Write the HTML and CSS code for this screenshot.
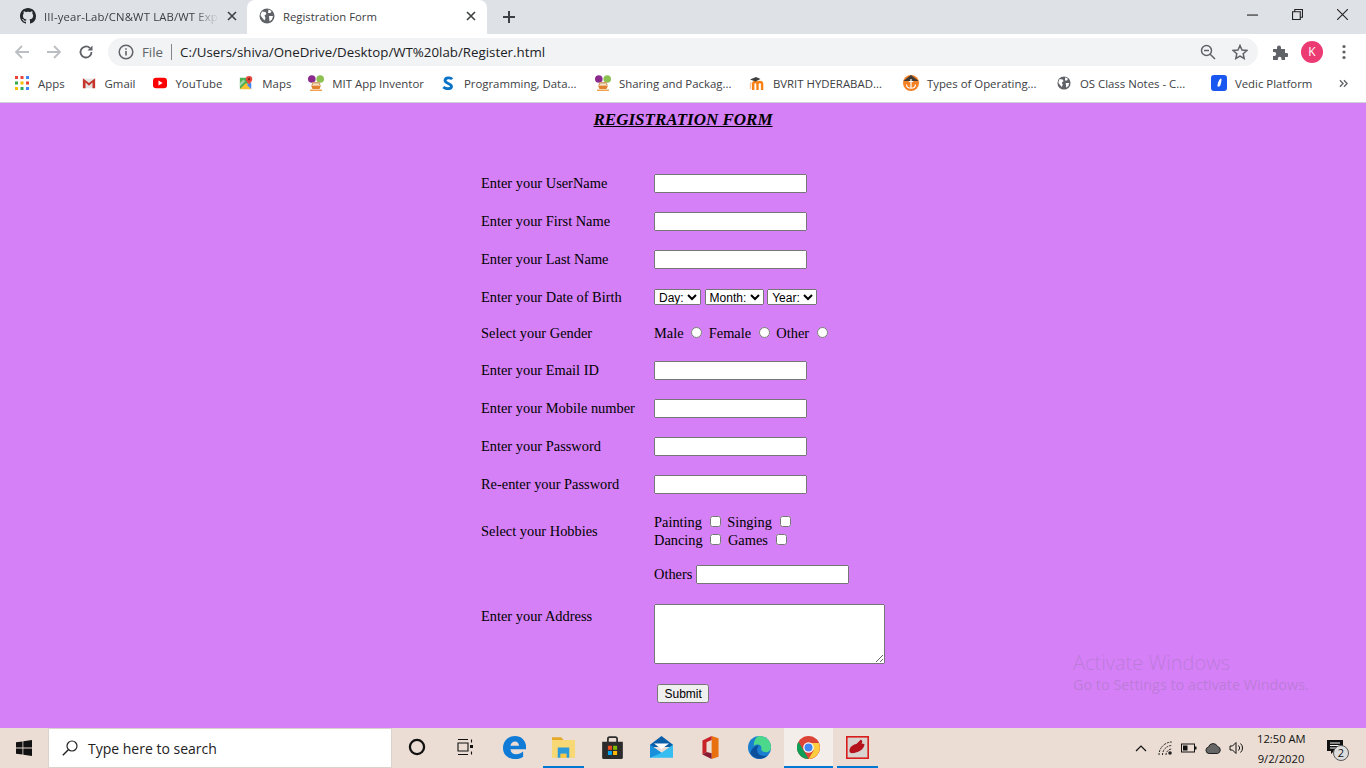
FILE: index.html
```html
<!DOCTYPE html>
<html lang="en">
<head>
<meta charset="UTF-8">
<title>Registration Form</title>
<link rel="stylesheet" href="styles.css">
</head>
<body>
<!-- browser chrome -->
<div class="tabstrip">
    <div class="tab">
        <svg class="tab-icon" viewBox="0 0 16 16"><path fill="#24292e" d="M8 0C3.58 0 0 3.58 0 8c0 3.54 2.29 6.53 5.47 7.59.4.07.55-.17.55-.38 0-.19-.01-.82-.01-1.49-2.01.37-2.53-.49-2.69-.94-.09-.23-.48-.94-.82-1.13-.28-.15-.68-.52-.01-.53.63-.01 1.08.58 1.23.82.72 1.21 1.87.87 2.33.66.07-.52.28-.87.51-1.07-1.78-.2-3.64-.89-3.64-3.95 0-.87.31-1.59.82-2.15-.08-.2-.36-1.02.08-2.12 0 0 .67-.21 2.2.82.64-.18 1.32-.27 2-.27s1.36.09 2 .27c1.53-1.04 2.2-.82 2.2-.82.44 1.1.16 1.92.08 2.12.51.56.82 1.27.82 2.15 0 3.07-1.87 3.75-3.65 3.95.29.25.54.73.54 1.48 0 1.07-.01 1.93-.01 2.2 0 .21.15.46.55.38A8.01 8.01 0 0 0 16 8c0-4.42-3.58-8-8-8z"/></svg>
        <span class="tab-title tab-title-faded">III-year-Lab/CN&amp;WT LAB/WT Exp</span>
        <svg class="tab-close" viewBox="0 0 10 10"><path d="M1 1l8 8M9 1l-8 8" stroke="#3c4043" stroke-width="1.6"/></svg>
    </div>
    <div class="tab tab-active">
        <svg class="tab-icon" viewBox="0 0 16 16"><circle cx="8" cy="8" r="7.5" fill="#5f6368"/><path fill="#fff" d="M3 3.500l3.500.5 1 2-2 1.500 1 2.500-1 2.500L2.500 9 1.500 7zM9.500 1.500l3 1.500-1 2H9zM10 8h4l-1 3.500-2.500 2z"/></svg>
        <span class="tab-title">Registration Form</span>
        <svg class="tab-close" viewBox="0 0 10 10"><path d="M1 1l8 8M9 1l-8 8" stroke="#3c4043" stroke-width="1.6"/></svg>
    </div>
    <svg class="new-tab" viewBox="0 0 12 12"><path d="M6 0v12M0 6h12" stroke="#3c4043" stroke-width="2"/></svg>
    <div class="window-btns">
        <svg viewBox="0 0 10 10"><path d="M0 5.500h10" stroke="#222" stroke-width="1"/></svg>
        <svg viewBox="0 0 10 10"><path d="M.5 2.500h7v7h-7zM2.500 2.500V.5h7v7h-2" fill="none" stroke="#222" stroke-width="1"/></svg>
        <svg viewBox="0 0 10 10"><path d="M0 0l10 10M10 0L0 10" stroke="#222" stroke-width="1"/></svg>
    </div>
</div>

<div class="toolbar">
    <svg class="nav-icon" viewBox="0 0 16 16"><path d="M15 8H2M8 2L2 8l6 6" fill="none" stroke="#bbbec2" stroke-width="1.800"/></svg>
    <svg class="nav-icon" viewBox="0 0 16 16"><path d="M1 8h13M8 2l6 6-6 6" fill="none" stroke="#bbbec2" stroke-width="1.800"/></svg>
    <svg class="nav-icon" viewBox="0 0 16 16"><path d="M13.500 8a5.500 5.500 0 1 1-1.600-3.900" fill="none" stroke="#5f6368" stroke-width="1.800"/><path d="M14.500 1.500v5h-5z" fill="#5f6368"/></svg>
    <div class="omnibox">
        <svg class="info-icon" viewBox="0 0 16 16"><circle cx="8" cy="8" r="6.800" fill="none" stroke="#5f6368" stroke-width="1.500"/><path d="M8 7v4.500M8 4.200v1.600" stroke="#5f6368" stroke-width="1.600"/></svg>
        <span class="omni-file">File</span>
        <span class="omni-sep"></span>
        <span class="omni-url">C:/Users/shiva/OneDrive/Desktop/WT%20lab/Register.html</span>
        <svg class="omni-zoom" viewBox="0 0 16 16"><circle cx="6.500" cy="6.500" r="5" fill="none" stroke="#5f6368" stroke-width="1.500"/><path d="M4 6.500h5M10.200 10.200L15 15" stroke="#5f6368" stroke-width="1.500"/></svg>
        <svg class="omni-star" viewBox="0 0 16 16"><path d="M8 1.500l2 4.500 4.800.5-3.600 3.200 1 4.800L8 12.100l-4.200 2.400 1-4.800L1.200 6.500 6 6z" fill="none" stroke="#5f6368" stroke-width="1.500"/></svg>
    </div>
    <svg class="puzzle" viewBox="0 0 16 16"><path fill="#5f6368" d="M1 5h4V3.500a2 2 0 0 1 4 0V5h4v4h1.500a2 2 0 0 1 0 4H13v3H9.500v-1.500a1.800 1.800 0 0 0-3.600 0V16H1v-4h1.200a2 2 0 0 0 0-4H1z"/></svg>
    <span class="avatar">K</span>
    <svg class="menu-dots" viewBox="0 0 4 16"><circle cx="2" cy="2.500" r="1.600" fill="#5f6368"/><circle cx="2" cy="8" r="1.600" fill="#5f6368"/><circle cx="2" cy="13.500" r="1.600" fill="#5f6368"/></svg>
</div>

<div class="bookmarks">
    <a class="bm"><svg class="bm-icon" viewBox="0 0 14 14"><g><rect width="3" height="3" fill="#ea4335"/><rect x="5.500" width="3" height="3" fill="#ea4335"/><rect x="11" width="3" height="3" fill="#4285f4"/><rect y="5.500" width="3" height="3" fill="#34a853"/><rect x="5.500" y="5.500" width="3" height="3" fill="#fbbc04"/><rect x="11" y="5.500" width="3" height="3" fill="#ea4335"/><rect y="11" width="3" height="3" fill="#fbbc04"/><rect x="5.500" y="11" width="3" height="3" fill="#34a853"/><rect x="11" y="11" width="3" height="3" fill="#4285f4"/></g></svg>Apps</a>
    <a class="bm"><svg class="bm-icon" viewBox="0 0 16 16"><path fill="#e4e4e4" d="M1 3h14v11H1z"/><path fill="#c5352b" d="M1 2.500l7 5.500 7-5.500V14h-3V7.500L8 11 4 7.500V14H1z"/></svg>Gmail</a>
    <a class="bm"><svg class="bm-icon" viewBox="0 0 16 16"><rect y="2" width="16" height="12" rx="3.500" fill="#f00"/><path d="M6.300 5.200L11 8l-4.700 2.800z" fill="#fff"/></svg>YouTube</a>
    <a class="bm"><svg class="bm-icon" viewBox="0 0 16 16"><path fill="#4caf50" d="M1 2h10v6L1 15z"/><path fill="#fbc02d" d="M1 15l7-7 6 7z"/><path fill="#4285f4" d="M9 10l5-3v8z"/><path fill="#9fd3a8" d="M1 8l4-4 2 2-6 6z"/><path fill="#e5483b" d="M11.500 0a3.700 3.700 0 0 1 3.700 3.700c0 2.300-2.500 4-3.700 6.300-1.200-2.300-3.700-4-3.700-6.300A3.700 3.700 0 0 1 11.500 0z"/><circle cx="11.500" cy="3.700" r="1.300" fill="#8c1c13"/></svg>Maps</a>
    <a class="bm"><svg class="bm-icon bm-icon-wide" viewBox="0 0 16 16"><circle cx="3.800" cy="4" r="3.800" fill="#8a2a8c"/><circle cx="12.200" cy="4" r="3.800" fill="#8cc152"/><path fill="#d3a06a" d="M4.500 7h7l1 3h-9z"/><path fill="#f3e2c8" d="M5 8.500h6v1.500H5z"/><path fill="#e0822d" d="M3 10.500h10l-1.500 3.500h-7z"/><path fill="#f0a24f" d="M2 14.500h12V16H2z"/></svg>MIT App Inventor</a>
    <a class="bm bm-long"><svg class="bm-icon" viewBox="0 0 16 16"><path d="M12.800 3.600C11 1.500 5 1.300 4.600 5S12.200 8.500 12 12s-7 3-9.300.6" fill="none" stroke="#0a73c7" stroke-width="3.300"/></svg>Programming, Data...</a>
    <a class="bm bm-long"><svg class="bm-icon bm-icon-wide" viewBox="0 0 16 16"><circle cx="3.800" cy="4" r="3.800" fill="#8a2a8c"/><circle cx="12.200" cy="4" r="3.800" fill="#8cc152"/><path fill="#d3a06a" d="M4.500 7h7l1 3h-9z"/><path fill="#f3e2c8" d="M5 8.500h6v1.500H5z"/><path fill="#e0822d" d="M3 10.500h10l-1.500 3.500h-7z"/><path fill="#f0a24f" d="M2 14.500h12V16H2z"/></svg>Sharing and Packag...</a>
    <a class="bm bm-long"><svg class="bm-icon bm-icon-wide" viewBox="0 0 16 16"><path d="M4.200 15V9c0-2.600 4.300-2.600 4.300 0v6M8.500 9c0-2.600 4.600-2.600 4.600 0v6" fill="none" stroke="#f98012" stroke-width="2.400"/><path d="M1.500 14V9.500c0-1 .5-1.500 1-2" fill="none" stroke="#fbc49a" stroke-width="1.500"/><path d="M1 4.500l6-2.500 4.500 2-5 2.500z" fill="#3f3f3f"/></svg>BVRIT HYDERABAD...</a>
    <a class="bm bm-long"><svg class="bm-icon bm-icon-wide" viewBox="0 0 16 16"><circle cx="8" cy="8" r="8" fill="#f48024"/><path d="M.4 6L8 0l7.600 6z" fill="#3f3a36"/><path d="M8 4v9.500M5.800 6.500h4.400M3.500 9.500c.3 5 8.700 5 9 0" fill="none" stroke="#fff" stroke-width="1.200"/></svg>Types of Operating...</a>
    <a class="bm bm-long"><svg class="bm-icon" viewBox="0 0 16 16"><circle cx="8" cy="8" r="7.500" fill="#5f6368"/><path fill="#fff" d="M3 3.500l3.500.5 1 2-2 1.500 1 2.500-1 2.500L2.500 9 1.500 7zM9.500 1.500l3 1.500-1 2H9zM10 8h4l-1 3.500-2.500 2z"/></svg>OS Class Notes - C...</a>
    <a class="bm"><svg class="bm-icon bm-icon-wide" viewBox="0 0 16 16"><rect width="16" height="16" rx="3" fill="#1a56f0"/><path d="M10 3.500c.8 0 .5 3-.5 6.500-.5 1.500-3 2.500-3 .7 0-2.500 2-7.200 3.500-7.200z" fill="#fff"/></svg>Vedic Platform</a>
    <svg class="bm-more" viewBox="0 0 10 10"><path d="M1 1.500L4.500 5 1 8.500M5.500 1.500L9 5 5.500 8.500" fill="none" stroke="#5f6368" stroke-width="1.500"/></svg>
</div>

<!-- the page itself -->
<main class="page">
    <h3 class="form-title">REGISTRATION FORM</h3>
    <form>
    <table class="form-table">
        <tr><td class="lbl">Enter your UserName</td><td><input type="text"></td></tr>
        <tr><td class="lbl">Enter your First Name</td><td><input type="text"></td></tr>
        <tr><td class="lbl">Enter your Last Name</td><td><input type="text"></td></tr>
        <tr class="dob-row">
            <td class="lbl">Enter your Date of Birth</td>
            <td>
                <select><option>Day:</option></select>
                <select><option>Month:</option></select>
                <select><option>Year:</option></select>
            </td>
        </tr>
        <tr class="gender-row">
            <td class="lbl">Select your Gender</td>
            <td class="choices">Male <input type="radio" name="g"> Female <input type="radio" name="g"> Other <input type="radio" name="g"></td>
        </tr>
        <tr><td class="lbl">Enter your Email ID</td><td><input type="text"></td></tr>
        <tr><td class="lbl">Enter your Mobile number</td><td><input type="text"></td></tr>
        <tr><td class="lbl">Enter your Password</td><td><input type="password"></td></tr>
        <tr><td class="lbl">Re-enter your Password</td><td><input type="password"></td></tr>
        <tr class="hobby-row">
            <td class="lbl">Select your Hobbies</td>
            <td class="choices">Painting <input type="checkbox"> Singing <input type="checkbox"><br>Dancing <input type="checkbox"> Games <input type="checkbox"></td>
        </tr>
        <tr><td></td><td>Others <input type="text"></td></tr>
        <tr class="address-row"><td class="lbl">Enter your Address</td><td><textarea></textarea></td></tr>
        <tr class="submit-row"><td></td><td><input type="submit" value="Submit"></td></tr>
    </table>
    </form>
    <div class="activate">
        <div class="activate-big">Activate Windows</div>
        <div class="activate-small">Go to Settings to activate Windows.</div>
    </div>
</main>

<!-- windows taskbar -->
<div class="taskbar">
    <div class="start"><svg viewBox="0 0 16 16"><path fill="#111" d="M0 2.300l6.500-.9v6.200H0zM7.300 1.300L16 0v7.600H7.300zM0 8.400h6.500v6.200L0 13.700zM7.300 8.400H16V16l-8.700-1.300z"/></svg></div>
    <div class="search">
        <svg viewBox="0 0 16 16"><circle cx="10" cy="6" r="5" fill="none" stroke="#222" stroke-width="1.200"/><path d="M6.300 9.700L.8 15.200" stroke="#222" stroke-width="1.400"/></svg>
        <span>Type here to search</span>
    </div>
    <div class="slot"><svg viewBox="0 0 16 16"><circle cx="8" cy="8" r="6.300" fill="none" stroke="#111" stroke-width="2"/></svg></div>
    <div class="slot"><svg viewBox="0 0 18 18"><path d="M1 1.500h10M1 16.500h10M1 5h10v8H1zM14.500 1.500v3M14.500 13.500v3" fill="none" stroke="#111" stroke-width="1.100"/><rect x="13" y="7" width="3" height="3" fill="#111"/></svg></div>
    <div class="slot"><svg class="slot-big" viewBox="0 0 20 20"><path fill="#0f7bd6" d="M10.500 0C4.500 0 0 4.500 0 10.500S4.500 20 10.500 20c3 0 5.500-.8 7-2v-4.500c-1.500 1.300-3.800 2.400-6 2.400-3 0-4.800-1.500-5-4.400H20c.8-6.200-3-11.500-9.500-11.500zM6.500 8.500c.3-2.300 2-3.700 4-3.700s3.300 1.400 3.400 3.700z"/></svg></div>
    <div class="slot slot-open"><svg class="slot-big" viewBox="0 0 20 20"><path fill="#e5a82b" d="M0 1h8l2 2.500H0z"/><path fill="#f8d775" d="M0 3.500h20V19H0z"/><path fill="#2c9ad8" d="M5 10h10v9h-2.500v-3.500h-5V19H5z"/><path fill="#f7c843" d="M7.500 15.500h5V19h-5z"/></svg></div>
    <div class="slot"><svg class="slot-big" viewBox="0 0 20 20"><path d="M6 6V2.500a1.500 1.500 0 0 1 1.500-1.500h5A1.500 1.500 0 0 1 14 2.500V6" fill="none" stroke="#2b2b2b" stroke-width="1.500"/><path d="M1 5h18v14a1 1 0 0 1-1 1H2a1 1 0 0 1-1-1z" fill="#2b2b2b"/><rect x="6" y="8.500" width="3.500" height="3.500" fill="#f25022"/><rect x="10.500" y="8.500" width="3.500" height="3.500" fill="#7fba00"/><rect x="6" y="13" width="3.500" height="3.500" fill="#00a4ef"/><rect x="10.500" y="13" width="3.500" height="3.500" fill="#ffb900"/></svg></div>
    <div class="slot"><svg class="slot-big" viewBox="0 0 20 20"><path fill="#0a5fa8" d="M10 0L0 7.500v2h20v-2z"/><path fill="#fff" d="M3.500 6.500h13L10 11.500z"/><path fill="#36bdf2" d="M0 7.500l10 7 10-7V19H0z"/><path fill="#1a90dc" d="M0 7.500l10 7L0 19z"/></svg></div>
    <div class="slot"><svg class="slot-big" viewBox="0 0 20 20"><path fill="#e8700f" d="M11 0l6 2v16l-6 2z"/><path fill="#c7222a" d="M3 4l8-4v3.500L6.500 5.500V14L3 16z"/><path fill="#8a1a32" d="M3 16l3.500-2 4.500 1v5z"/></svg></div>
    <div class="slot"><svg class="slot-big" viewBox="0 0 20 20"><circle cx="10" cy="10" r="10" fill="#1b7fd0"/><path fill="#4bd88a" d="M10 0a10 10 0 0 1 10 10c0 3-3 4.500-5.500 4-2-.4-3-1.500-3-3 1-3-3-5-6.500-2.500C5 3.500 7.500 0 10 0z"/><path fill="#0c4f9c" d="M2 15c3 5 10 6.500 15 2-4 1-9 0-9-5 0-2 1-3.500 2-4-4 0-7 3-8 7z"/></svg></div>
    <div class="slot slot-active"><svg class="slot-big" viewBox="0 0 20 20"><circle cx="10" cy="10" r="10" fill="#db4437"/><path fill="#0f9d58" d="M10 20A10 10 0 0 1 1.300 5L6 13l4 7z"/><path fill="#ffcd40" d="M10 6h9a10 10 0 0 1-9 14l4.500-7.500z"/><circle cx="10" cy="10" r="4.600" fill="#fff"/><circle cx="10" cy="10" r="3.500" fill="#4285f4"/></svg></div>
    <div class="slot slot-open"><svg class="slot-big" viewBox="0 0 20 20"><rect x=".7" y=".7" width="18.600" height="18.600" fill="#d9d3cf" stroke="#d91c1c" stroke-width="1.400"/><path fill="#b5121b" d="M3 13c0-3.500 3-5.500 6-6l4-4c1.500 1 1.500 2.500.5 3.500l2.500.5c.3 3-3 6-6 7-3 1.200-7 1.500-7-1z"/></svg></div>
    <div class="tray">
        <svg class="tray-chevron" viewBox="0 0 12 8"><path d="M1 7l5-5 5 5" fill="none" stroke="#111" stroke-width="1.200"/></svg>
        <svg class="tray-icon" viewBox="0 0 16 16"><path d="M2 15A13 13 0 0 1 15 2M5.500 15A9.500 9.500 0 0 1 15 5.500M9 15a6 6 0 0 1 6-6" fill="none" stroke="#222" stroke-width="1" stroke-dasharray="2 1"/><circle cx="13" cy="13" r="1.800" fill="#222"/></svg>
        <svg class="tray-icon" viewBox="0 0 16 16"><rect x=".5" y="4" width="13" height="8" fill="none" stroke="#111"/><rect x="2" y="5.500" width="4.500" height="5" fill="#111"/><rect x="14" y="6.500" width="1.500" height="3" fill="#111"/></svg>
        <svg class="tray-icon" viewBox="0 0 16 16"><path d="M4 13.500a3.300 3.300 0 0 1-.5-6.500 4.800 4.800 0 0 1 9-.5 3.600 3.600 0 0 1 0 7z" fill="#666" stroke="#222"/></svg>
        <svg class="tray-icon" viewBox="0 0 16 16"><path d="M1 6h2.500L7 2.500v11L3.500 10H1z" fill="none" stroke="#111"/><path d="M9.500 5.500a3.500 3.500 0 0 1 0 5M11.500 3.500a6 6 0 0 1 0 9" fill="none" stroke="#111"/></svg>
        <div class="clock"><div>12:50 AM</div><div>9/2/2020</div></div>
        <div class="notif">
            <svg viewBox="0 0 16 16"><path fill="#111" d="M0 1h16v11H7l-3 3v-3H0z"/><path d="M3 4h10M3 6.500h10M3 9h7" stroke="#fff"/></svg>
            <span class="notif-count">2</span>
        </div>
    </div>
</div>
</body>
</html>
```

FILE: styles.css
```css
* {
    box-sizing: border-box;
}

html, body {
    height: 100%;
}

body {
    margin: 0;
    display: flex;
    flex-direction: column;
    height: 768px;
    overflow: hidden;
    font-family: "Liberation Serif", serif;
    background: #d580f7;
}

svg {
    display: block;
    flex: none;
}

/* tabs */
.tabstrip {
    height: 34px;
    flex: none;
    display: flex;
    align-items: flex-end;
    padding-left: 8px;
    background: #dee1e6;
    font: 12px "Open Sans", sans-serif;
    color: #3c4043;
}

.tab {
    width: 239px;
    height: 34px;
    display: flex;
    align-items: center;
    padding: 0 10px 2px 12px;
}

.tab-active {
    width: 240px;
    background: #fff;
    border-radius: 8px 8px 0 0;
    padding-right: 11px;
}

.tab-icon {
    width: 16px;
    height: 16px;
    margin-right: 8px;
}

.tab-title {
    flex: 1;
    white-space: nowrap;
    overflow: hidden;
    font-size: 11.300px;
}

.tab-title-faded {
    letter-spacing: .15px;
    -webkit-mask-image: linear-gradient(90deg, #000 85%, transparent);
    mask-image: linear-gradient(90deg, #000 85%, transparent);
}

.tab-close {
    width: 10px;
    height: 10px;
    margin-left: 8px;
}

.new-tab {
    width: 12px;
    height: 12px;
    margin: 0 0 11px 16px;
}

.window-btns {
    margin-left: auto;
    align-self: flex-start;
    display: flex;
    gap: 34px;
    padding: 9px 18px 0 0;
}

.window-btns svg {
    width: 11px;
    height: 11px;
}

/* address bar */
.toolbar {
    height: 32px;
    flex: none;
    display: flex;
    align-items: center;
    padding: 4px 0 0 14px;
    background: #fff;
    font: 13.300px "Open Sans", sans-serif;
}

.nav-icon {
    width: 16px;
    height: 16px;
    margin-right: 16px;
}

.omnibox {
    width: 1150px;
    height: 28px;
    margin-left: -2px;
    display: flex;
    align-items: center;
    padding-left: 10px;
    border-radius: 14px;
    background: #f1f3f4;
}

.info-icon {
    width: 16px;
    height: 16px;
}

.omni-file {
    margin-left: 8px;
    color: #5f6368;
}

.omni-sep {
    width: 1px;
    height: 16px;
    margin: 0 8px 0 8px;
    background: #80868b;
}

.omni-url {
    color: #202124;
}

.omni-zoom {
    width: 16px;
    height: 16px;
    margin-left: auto;
}

.omni-star {
    width: 16px;
    height: 16px;
    margin: 0 10px 0 16px;
}

.puzzle {
    width: 16px;
    height: 16px;
    margin-left: 14px;
}

.avatar {
    width: 22px;
    height: 22px;
    margin-left: 13px;
    border-radius: 50%;
    background: #ec3a73;
    color: #fff;
    font-size: 12px;
    line-height: 22px;
    text-align: center;
}

.menu-dots {
    width: 4px;
    height: 16px;
    margin-left: 19px;
}

/* bookmarks */
.bookmarks {
    height: 37px;
    flex: none;
    display: flex;
    align-items: center;
    gap: 17px;
    padding: 0 18px 2px 15px;
    background: #fff;
    border-bottom: 1px solid #d0d2d5;
    font: 11.400px "Open Sans", sans-serif;
    color: #3c4043;
}

.bm {
    display: flex;
    align-items: center;
    gap: 9px;
    white-space: nowrap;
}

/* chrome caps long bookmarks at one width */
.bm-long {
    width: 137px;
}

.bm-icon {
    width: 14px;
    height: 14px;
}

.bm-icon-wide {
    width: 16px;
    height: 16px;
    margin-right: -1px;
}

.bm-more {
    width: 9px;
    height: 9px;
    margin-left: auto;
}

/* page */
.page {
    flex: 1;
    position: relative;
    overflow: hidden;
    font-size: 14.400px;
    color: #000;
}

.form-title {
    margin: 7px 0 0;
    font-size: 17px;
    font-style: italic;
    font-weight: bold;
    text-align: center;
    text-decoration: underline;
}

.form-table {
    margin: 34px auto 0;
    border-collapse: collapse;
}

.form-table td {
    padding: 10px 1px 9px 0;
}

.form-table td.lbl {
    width: 174px;
    padding-left: 1px;
    padding-right: 0;
}

.form-table input[type="text"],
.form-table input[type="password"] {
    width: 153px;
    height: 19px;
}

.form-table select {
    height: 16px;
    font-size: 12px;
}

.form-table .dob-row td {
    padding-top: 11px;
    padding-bottom: 8px;
}

.choices {
    line-height: 18px;
}

.choices input {
    width: 11px;
    height: 11px;
    margin: 0 3px 0 4px;
}

.form-table .hobby-row td {
    padding: 10px 1px 6px 0;
}

.form-table .hobby-row td.lbl {
    padding: 10px 0 6px 1px;
}

.address-row td {
    vertical-align: top;
}

.form-table .address-row td {
    padding-top: 11px;
}

.form-table .address-row td.lbl {
    padding-top: 15px;
}

.form-table textarea {
    display: block;
    width: 231px;
    height: 60px;
}

.form-table .submit-row td {
    padding: 11px 1px 0 3px;
}

.submit-row input {
    height: 19px;
    padding: 0 5.500px;
    font-size: 12px;
}

.activate {
    position: absolute;
    left: 1073px;
    top: 546px;
    color: rgba(110, 110, 120, .25);
    font-family: "Open Sans", sans-serif;
}

.activate-big {
    font-size: 20px;
    font-weight: 300;
}

.activate-small {
    margin-top: -1px;
    font-size: 14.400px;
}

/* taskbar */
.taskbar {
    height: 40px;
    flex: none;
    display: flex;
    align-items: stretch;
    background: #ebddd4;
    font: 13px "Open Sans", sans-serif;
    color: #111;
}

.start {
    width: 48px;
    display: flex;
    align-items: center;
    justify-content: center;
}

.start svg {
    width: 16px;
    height: 16px;
}

.search {
    width: 344px;
    display: flex;
    align-items: center;
    gap: 10px;
    padding-left: 13px;
    background: #fff;
    border: 1px solid #d9d2cd;
    font-size: 14px;
    color: #222;
}

.search svg {
    width: 16px;
    height: 16px;
}

.slot {
    width: 49px;
    display: flex;
    align-items: center;
    justify-content: center;
    border-bottom: 2px solid transparent;
}

.slot svg {
    width: 18px;
    height: 18px;
}

.slot .slot-big {
    width: 23px;
    height: 23px;
}

.slot-open {
    border-image: linear-gradient(90deg, transparent 10%, #0078d4 10%, #0078d4 90%, transparent 90%) 1;
}

.slot-active {
    background: #f4eeea;
    border-bottom-color: #0078d4;
}

.tray {
    margin-left: auto;
    display: flex;
    align-items: center;
    padding-right: 21px;
}

.tray-chevron {
    width: 12px;
    height: 8px;
    margin-right: 10px;
}

.tray-icon {
    width: 16px;
    height: 16px;
    margin-right: 8px;
}

.clock {
    width: 48px;
    margin: 0 22px 0 4px;
    padding-top: 1px;
    font-size: 11.200px;
    line-height: 20px;
    text-align: center;
    white-space: nowrap;
}

.notif {
    position: relative;
    width: 18px;
    height: 18px;
}

.notif svg {
    width: 16px;
    height: 16px;
}

.notif-count {
    position: absolute;
    top: 6px;
    left: 6px;
    width: 16px;
    height: 16px;
    border-radius: 50%;
    border: 1px solid #555;
    background: #ddd;
    font-size: 11px;
    line-height: 14px;
    text-align: center;
}
```
